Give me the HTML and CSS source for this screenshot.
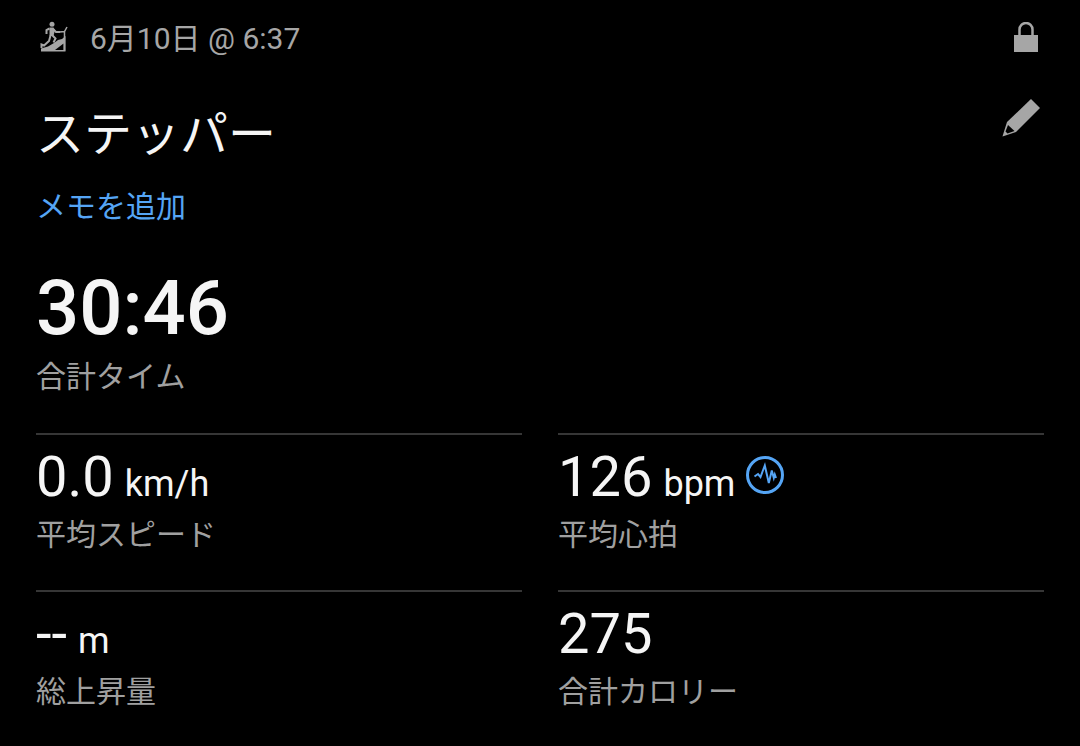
FILE: index.html
```html
<!DOCTYPE html>
<html lang="ja">
<head>
    <meta charset="UTF-8">
    <meta name="viewport" content="width=device-width, initial-scale=1">
    <title>ステッパー</title>
    <link rel="stylesheet" href="styles.css">
</head>
<body>
    <main class="activity">
        <header class="meta">
            <svg class="stepper-icon" viewBox="0 0 28 32" aria-hidden="true">
                <circle cx="12" cy="3.300" r="2.500" fill="currentColor"/>
                <!-- ramp -->
                <path d="M1 30.500v-3l7-2 6-3.500 4-3 4-1 3.500-3v15.500z" fill="currentColor"/>
                <path d="M15 29l8.500-6.500V29z" fill="#000"/>
                <!-- person -->
                <path d="M9.500 6.500h4L15 9l-1.500 6h-4z" fill="currentColor"/>
                <path d="M9.500 7.500L6.500 9v4M13.500 8.500l2.500 2.500h4M12.500 14.500l3 3-2 4M10.500 14.500L9 20l-5 4.500-2.500-1V27" fill="none" stroke="currentColor" stroke-width="2"/>
                <path d="M19.500 11l5-.5 2.500-4.500M24.500 10v20" fill="none" stroke="currentColor" stroke-width="1.500"/>
            </svg>
            <time class="date">6月10日 @ 6:37</time>
            <button class="icon-button lock" type="button" aria-label="公開範囲">
                <svg width="24" height="30" viewBox="0 0 24 30">
                    <path d="M5.500 14V7.500a6.500 6.500 0 0 1 13 0V14" fill="none" stroke="currentColor" stroke-width="2.500"/>
                    <path d="M0 13h24v17H0z" fill="currentColor"/>
                </svg>
            </button>
        </header>

        <div class="heading">
            <h1>ステッパー</h1>
            <button class="icon-button edit" type="button" aria-label="編集">
                <svg width="38" height="38" viewBox="0 0 38 38">
                    <path d="M29 0l9 9-24 24L.5 37.500 5 23z" fill="currentColor"/>
                    <path d="M6 26l6.500 6-7 2.500-2-2z" fill="#000"/>
                </svg>
            </button>
        </div>

        <a class="note" href="#">メモを追加</a>

        <dl class="total">
            <dd class="time">30:46</dd>
            <dt>合計タイム</dt>
        </dl>

        <dl class="stats">
            <div class="stat">
                <dd>0.0 <span class="unit">km/h</span></dd>
                <dt>平均スピード</dt>
            </div>
            <div class="stat">
                <dd>126 <span class="unit">bpm</span>
                    <svg class="pulse" viewBox="0 0 38 38" aria-hidden="true">
                        <circle cx="19" cy="19" r="17.500"/>
                        <path d="M8.500 20.500l3.500-2.500 2.500 3 4.300-11.500 4 17.500 3-12.500 2 7.500 1-3.500 1.200 3.500"/>
                    </svg>
                </dd>
                <dt>平均心拍</dt>
            </div>
            <div class="stat">
                <dd>-- <span class="unit">m</span></dd>
                <dt>総上昇量</dt>
            </div>
            <div class="stat">
                <dd>275</dd>
                <dt>合計カロリー</dt>
            </div>
        </dl>
    </main>
</body>
</html>
```
FILE: styles.css
```css
* {
    box-sizing: border-box;
}

body {
    margin: 0;
    background-color: #000;
    color: #f5f5f5;
    font-family: Roboto, "Noto Sans CJK JP", sans-serif;
    font-size: 30px;
    line-height: 40px;
}

h1, dl, dd {
    margin: 0;
}

.activity {
    padding: 19px 36px;
}

.meta {
    display: flex;
    align-items: center;
    color: #a6a6a6;
}

.stepper-icon {
    width: 28px;
    height: 32px;
    margin: 0 22px 4px 4px;
}

.icon-button {
    display: flex;
    margin-left: auto;
    padding: 0;
    border: 0;
    background: none;
    color: #a6a6a6;
    cursor: pointer;
}

.lock {
    margin-right: 6px;
    margin-bottom: 4px;
}

.heading {
    display: flex;
    align-items: flex-start;
    margin-top: 40px;
}

h1 {
    font-size: 48px;
    font-weight: 400;
    line-height: 72px;
}

.edit {
    margin-right: 4px;
}

.note {
    display: inline-block;
    margin-top: 16px;
    color: #55a5f5;
    text-decoration: none;
}

.total {
    margin-top: 36px;
}

.time {
    font-size: 76px;
    font-weight: 500;
    line-height: 90px;
}

dt {
    color: #a0a0a0;
}

.total dt {
    margin-top: 4px;
}

.stats {
    display: grid;
    grid-template-columns: 1fr 1fr;
    column-gap: 36px;
    margin-top: 36px;
}

.stat {
    padding: 10px 0 35px;
    border-top: 2px solid #363636;
}

.stat dd {
    display: flex;
    align-items: baseline;
    gap: 11px;
    height: 70px;
    font-size: 56px;
    line-height: 64px;
}

.unit {
    font-size: 36px;
}

.pulse {
    align-self: flex-start;
    width: 38px;
    height: 38px;
    margin-top: 11px;
    fill: none;
    stroke: #55a5f5;
    stroke-width: 3;
}

.pulse path {
    stroke-width: 2;
}
```
